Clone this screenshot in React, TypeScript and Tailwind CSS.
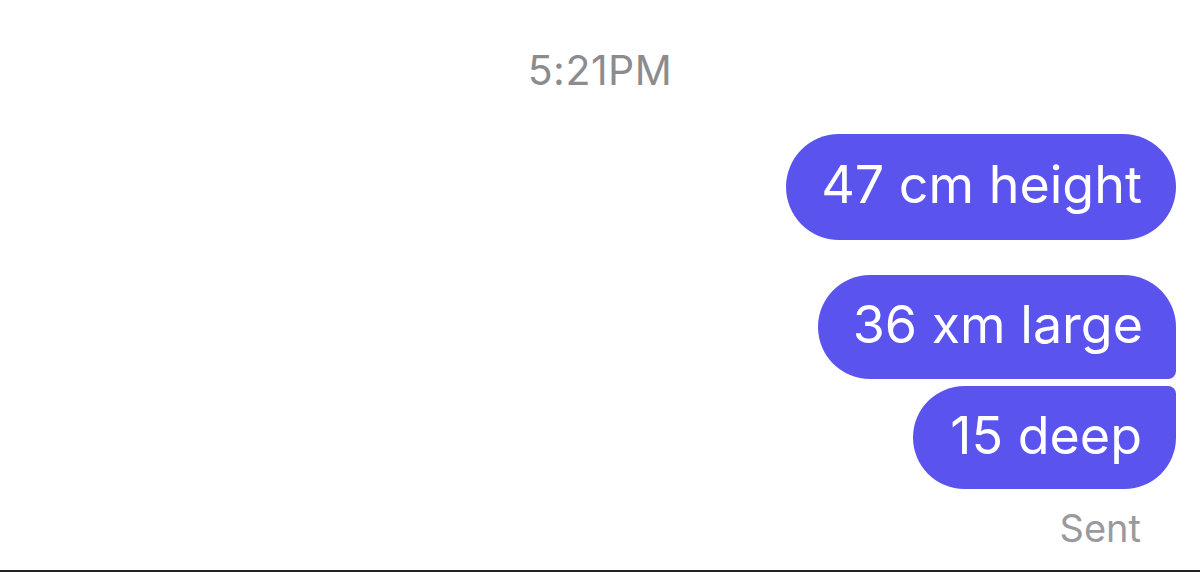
export default function App() {
  return (
    <div className="flex h-[572px] w-full flex-col bg-white font-['Inter','Liberation_Sans',sans-serif] antialiased">
      {/* Timestamp */}
      <div className="pt-[46px] text-center text-[41px] leading-[48px] tracking-[0.5px] text-[#8c8c90]">5:21PM</div>

      {/* Sent messages */}
      <div className="mt-[40px] flex flex-col items-end pr-[24px]">
        <div className="rounded-full bg-[#5a53ee] pl-[35px] pr-[34px] pt-[21px] pb-[25px] text-[52px] leading-[60px] text-white">
          47 cm height
        </div>
        <div className="mt-[35px] rounded-[52px] rounded-br-[8px] bg-[#5a53ee] pl-[35px] pr-[33px] pt-[20px] pb-[24px] text-[52px] leading-[60px] text-white">
          36 xm large
        </div>
        <div className="mt-[7px] rounded-[52px] rounded-tr-[8px] bg-[#5a53ee] pl-[37px] pr-[34px] pt-[20px] pb-[23px] text-[52px] leading-[60px] text-white">
          15 deep
        </div>
        <div className="mt-[17px] pr-[35px] text-[38px] leading-[44px] text-[#9a9a9e]">Sent</div>
      </div>

      <div className="flex-1" />
      <div className="h-[2px] w-full bg-[#232323]" />
    </div>
  );
}
